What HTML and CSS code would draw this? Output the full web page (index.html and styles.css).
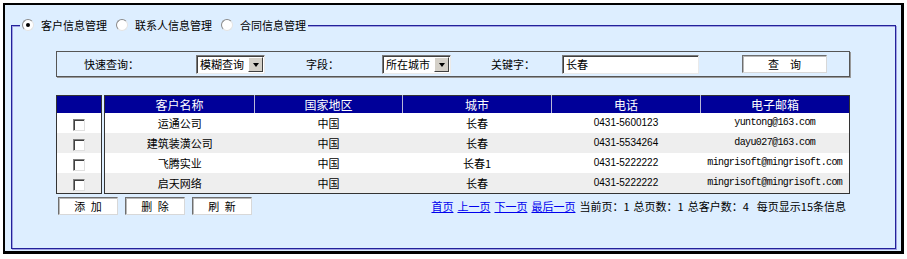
FILE: index.html
```html
<!DOCTYPE html>
<html lang="zh-CN">
<head>
  <meta charset="UTF-8" />
  <meta name="viewport" content="width=device-width, initial-scale=1.0"/>
  <title>客户信息管理</title>
  <link rel="stylesheet" href="styles.css">
</head>
<body>

  <div class="frame">
    <fieldset class="panel">
      <legend class="tabs">
        <label class="tab"><span class="radio on"></span>客户信息管理</label>
        <label class="tab"><span class="radio"></span>联系人信息管理</label>
        <label class="tab"><span class="radio"></span>合同信息管理</label>
      </legend>

      <div class="content">
        <!-- search bar -->
        <div class="search">
          <span class="lbl lbl-mode">快速查询：</span>
          <div class="select"><span>模糊查询</span><i class="arrow"></i></div>
          <span class="lbl lbl-field">字段：</span>
          <div class="select"><span>所在城市</span><i class="arrow"></i></div>
          <span class="lbl lbl-key">关键字：</span>
          <input class="keyword" type="text" value="长春" />
          <button class="btn btn-query">查　询</button>
        </div>

        <!-- customer list -->
        <div class="grid">
          <table class="checks">
            <tr><th></th></tr>
            <tr><td><input type="checkbox" class="chk" /></td></tr>
            <tr class="alt"><td><input type="checkbox" class="chk" /></td></tr>
            <tr><td><input type="checkbox" class="chk" /></td></tr>
            <tr class="alt"><td><input type="checkbox" class="chk" /></td></tr>
          </table>
          <table class="list">
            <tr>
              <th class="c1">客户名称</th>
              <th class="c2">国家地区</th>
              <th class="c3">城市</th>
              <th class="c4">电话</th>
              <th>电子邮箱</th>
            </tr>
            <tr>
              <td>运通公司</td><td>中国</td><td>长春</td>
              <td class="tel">0431-5600123</td><td class="mail">yuntong@163.com</td>
            </tr>
            <tr class="alt">
              <td>建筑装潢公司</td><td>中国</td><td>长春</td>
              <td class="tel">0431-5534264</td><td class="mail">dayu027@163.com</td>
            </tr>
            <tr>
              <td>飞腾实业</td><td>中国</td><td>长春1</td>
              <td class="tel">0431-5222222</td><td class="mail">mingrisoft@mingrisoft.com</td>
            </tr>
            <tr class="alt">
              <td>启天网络</td><td>中国</td><td>长春</td>
              <td class="tel">0431-5222222</td><td class="mail">mingrisoft@mingrisoft.com</td>
            </tr>
          </table>
        </div>

        <!-- actions and paging -->
        <div class="foot">
          <div class="actions">
            <button class="btn">添&ensp;加</button>
            <button class="btn">删&ensp;除</button>
            <button class="btn">刷&ensp;新</button>
          </div>
          <div class="pager">
            <a href="#">首页</a>
            <a href="#">上一页</a>
            <a href="#">下一页</a>
            <a href="#">最后一页</a>
            <span>当前页：1</span>
            <span>总页数：1</span>
            <span>总客户数：4</span>
            <span class="per">每页显示15条信息</span>
          </div>
        </div>
      </div>
    </fieldset>
  </div>

</body>
</html>
```

FILE: styles.css
```css
body {
  margin: 0;
  font-family: "Noto Sans CJK SC", sans-serif;
  font-size: 11px;
  color: #000;
  background: #fff;
}
.frame {
  box-sizing: border-box;
  width: 901px;
  height: 251px;
  margin: 3px 0 0 3px;
  padding: 12px 0 0 6px;
  background: #ddeeff;
  border: 2px solid #000;
  border-right-width: 3px;
  border-bottom-width: 3px;
}
.panel {
  box-sizing: border-box;
  width: 885px;
  height: 232px;
  margin: 0;
  padding: 0;
  border: 1px solid #22229a;
  box-shadow: inset 1px 1px 0 #a0a0e2, 1px 1px 0 #a0a0e2;
}
.tabs {
  margin-left: 8px;
  padding: 0 2px;
  line-height: 16px;
  background: #ddeeff;
  display: flex;
  gap: 9px;
}
.tab {
  display: flex;
  align-items: center;
}
.radio {
  box-sizing: border-box;
  width: 12px;
  height: 12px;
  margin-right: 7px;
  border-radius: 50%;
  border: 1px solid;
  border-color: #8a8a8a #e4e4e4 #e4e4e4 #8a8a8a;
  background: #fff;
  position: relative;
}
.radio.on::after {
  content: "";
  position: absolute;
  left: 3px;
  top: 3px;
  width: 4px;
  height: 4px;
  border-radius: 50%;
  background: #000;
}
.content {
  padding: 18px 0 0 44px;
  width: 794px;
}
.search {
  box-sizing: border-box;
  height: 26px;
  display: flex;
  align-items: center;
  padding-left: 27px;
  border: 1px solid #555;
  box-shadow: 1px 1px 0 #999;
}
.lbl-mode { width: 112px; }
.lbl-field { width: 76px; margin-left: 41px; }
.lbl-key { width: 71px; margin-left: 40px; }
.select,
.keyword {
  box-sizing: border-box;
  height: 19px;
  border: 1px solid;
  border-color: #7a7a7a #eaeaea #eaeaea #7a7a7a;
  box-shadow: inset 1px 1px 0 #404040;
  background: #fff;
}
.select {
  width: 69px;
  display: flex;
  align-items: center;
  justify-content: space-between;
  padding: 0 1px 0 3px;
  line-height: 16px;
}
.arrow {
  box-sizing: border-box;
  width: 15px;
  height: 15px;
  margin-top: 1px;
  background: #d4d0c8;
  border: 1px solid;
  border-color: #fff #404040 #404040 #fff;
  display: flex;
  align-items: center;
  justify-content: center;
}
.arrow::after {
  content: "";
  border-top: 4px solid #000;
  border-left: 3.5px solid transparent;
  border-right: 3.5px solid transparent;
}
.keyword {
  width: 137px;
  padding: 0 0 0 3px;
  font: inherit;
  line-height: 16px;
  outline: none;
}
.btn {
  box-sizing: border-box;
  width: 60px;
  height: 18px;
  padding: 0;
  font: inherit;
  line-height: 14px;
  color: #000;
  background: #fff;
  border: 1px solid;
  border-color: #6e6e6e #d8d8d8 #d8d8d8 #6e6e6e;
  box-shadow: inset 1px 1px 0 #b8b8b8;
  cursor: pointer;
}
.btn-query {
  width: 85px;
  margin-left: 43px;
}
.grid {
  display: flex;
  gap: 2px;
  margin-top: 18px;
}
table {
  border-collapse: collapse;
  table-layout: fixed;
  border: 1px solid #333;
  background: #fff;
}
.checks { width: 46px; }
.list { width: 746px; }
th {
  height: 17px;
  padding: 0;
  background: #000099;
  color: #fff;
  font-size: 12px;
  font-weight: normal;
  line-height: 16px;
}
.list th + th { border-left: 1px solid #b8b8d8; }
.c1 { width: 149px; }
.c2 { width: 147px; }
.c3 { width: 148px; }
.c4 { width: 148px; }
td {
  height: 20px;
  padding: 0;
  text-align: center;
  line-height: 16px;
}
tr.alt td { background: #eeeeee; }
.tel {
  font-family: "Liberation Sans", sans-serif;
  font-size: 10px;
}
.mail {
  font-family: "Liberation Mono", monospace;
  font-size: 10px;
  letter-spacing: -0.6px;
}
.chk {
  appearance: none;
  box-sizing: border-box;
  width: 12px;
  height: 12px;
  margin: 0;
  vertical-align: middle;
  border: 1px solid;
  border-color: #808080 #e0e0e0 #e0e0e0 #808080;
  box-shadow: inset 1px 1px 0 #404040;
  background: #fff;
}
.foot {
  display: flex;
  justify-content: space-between;
  align-items: center;
  margin-top: 3px;
}
.actions {
  display: flex;
  gap: 7px;
  padding-left: 2px;
}
.pager {
  display: flex;
  gap: 4px;
  padding-right: 4px;
}
.pager a { color: #0000ee; }
.pager .per { margin-left: 4px; }
```
